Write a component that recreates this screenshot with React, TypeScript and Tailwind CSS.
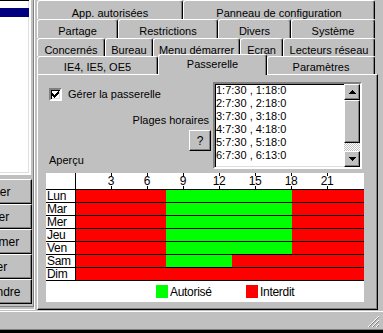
import React from 'react';

type TabDef = { label: string; w: string; sel?: boolean };

const tabRows: { h: string; pt: string; tabs: TabDef[] }[] = [
  {
    h: 'h-[19px]',
    pt: 'pt-[6px]',
    tabs: [
      { label: 'App. autorisées', w: 'w-[146px]' },
      { label: 'Panneau de configuration', w: 'w-[192px]' },
    ],
  },
  {
    h: 'h-[19px]',
    pt: 'pt-[5px]',
    tabs: [
      { label: 'Partage', w: 'w-[81px]' },
      { label: 'Restrictions', w: 'w-[100px]' },
      { label: 'Divers', w: 'w-[73px]' },
      { label: 'Système', w: 'w-[84px]' },
    ],
  },
  {
    h: 'h-[18px]',
    pt: 'pt-[5px]',
    tabs: [
      { label: 'Concernés', w: 'w-[68px]' },
      { label: 'Bureau', w: 'w-[48px]' },
      { label: 'Menu démarrer', w: 'w-[87px]' },
      { label: 'Ecran', w: 'w-[43px]' },
      { label: 'Lecteurs réseau', w: 'w-[92px]' },
    ],
  },
  {
    h: 'h-[18px]',
    pt: 'pt-[4px]',
    tabs: [
      { label: 'IE4, IE5, OE5', w: 'w-[121px]' },
      { label: 'Passerelle', w: 'w-[109px]', sel: true },
      { label: 'Paramètres', w: 'w-[108px]' },
    ],
  },
];

const leftButtons = ['Ajouter', 'Copier', 'Supprimer', 'Coller', 'Descendre'];

const plages = [
  '1:7:30 , 1:18:0',
  '2:7:30 , 2:18:0',
  '3:7:30 , 3:18:0',
  '4:7:30 , 4:18:0',
  '5:7:30 , 5:18:0',
  '6:7:30 , 6:13:0',
];

// hours allowed per day: [from, to] in hours, null = never
const days: { label: string; range: [number, number] | null }[] = [
  { label: 'Lun', range: [7.5, 18] },
  { label: 'Mar', range: [7.5, 18] },
  { label: 'Mer', range: [7.5, 18] },
  { label: 'Jeu', range: [7.5, 18] },
  { label: 'Ven', range: [7.5, 18] },
  { label: 'Sam', range: [7.5, 13] },
  { label: 'Dim', range: null },
];

const HOUR = 12; // px per hour in the chart

const raised =
  'border border-white border-r-black border-b-black shadow-[inset_-1px_-1px_0_#808080]';
const sunken =
  'border-2 border-t-[#808080] border-l-[#808080] border-b-white border-r-white shadow-[inset_1px_1px_0_#000,inset_-1px_-1px_0_#dfdfdf]';

const checkPixels = [[6], [5, 6], [0, 4, 5, 6], [0, 1, 3, 4, 5], [0, 1, 2, 3, 4], [1, 2, 3], [2]];

function Tab({ tab, pt }: { tab: TabDef; pt: string }) {
  if (tab.sel) {
    return (
      <div
        className={`${tab.w} relative z-10 -mt-[2px] h-[21px] shrink-0 rounded-t-[3px] border-l border-t border-r border-white border-r-black bg-[#c0c0c0] pt-[3px] text-center leading-[13px] shadow-[inset_-1px_0_0_#808080]`}
      >
        {tab.label}
      </div>
    );
  }
  return (
    <div
      className={`${tab.w} ${pt} h-full shrink-0 rounded-t-[3px] border-l border-t border-r border-white border-r-black text-center leading-[13px] shadow-[inset_-1px_0_0_#808080]`}
    >
      {tab.label}
    </div>
  );
}

function ScrollButton({ up }: { up?: boolean }) {
  return (
    <div className={`flex h-[16px] items-center justify-center bg-[#c0c0c0] ${raised}`}>
      <svg width="7" height="4" viewBox="0 0 7 4" shapeRendering="crispEdges">
        {up ? <polygon points="3.5,0 7,4 0,4" fill="#000" /> : <polygon points="0,0 7,0 3.5,4" fill="#000" />}
      </svg>
    </div>
  );
}

function Chart() {
  const ticks = [3, 6, 9, 12, 15, 18, 21];
  return (
    <div className="mt-[4px] flex h-[129px] w-[318px] flex-col bg-white text-[12px] leading-[12px] tracking-[-0.3px]">
      {/* hours header */}
      <div className="flex h-[16px]">
        <div className="w-[29px]" />
        <div className="w-px bg-black" />
        <div className="relative w-[288px]">
          {ticks.map((t) => (
            <div key={t} className="absolute top-0 h-full" style={{ left: t * HOUR - 1 }}>
              <div className="absolute top-0 h-full w-px bg-black" />
              <span className="absolute top-[3px] -translate-x-1/2 bg-white px-px leading-[10px]">{t}</span>
            </div>
          ))}
        </div>
      </div>

      {/* days */}
      {days.map((d) => {
        const from = d.range ? d.range[0] * HOUR : 0;
        const width = d.range ? (d.range[1] - d.range[0]) * HOUR : 0;
        return (
          <div key={d.label} className="flex h-[13px] border-t border-black">
            <div className="w-[29px] pl-[1px]">{d.label}</div>
            <div className="w-px bg-black" />
            <div className="flex w-[288px] bg-[#ff0000]">
              <div style={{ width: from }} />
              <div className="bg-[#00ff00]" style={{ width }} />
            </div>
          </div>
        );
      })}
      <div className="h-px bg-black" />

      {/* legend */}
      <div className="flex flex-1 pl-[110px] pt-[4px]">
        <div className="flex w-[90px] items-start">
          <div className="h-[13px] w-[12px] bg-[#00ff00]" />
          <span className="ml-[2px] mt-[1px]">Autorisé</span>
        </div>
        <div className="flex items-start">
          <div className="h-[13px] w-[12px] bg-[#ff0000]" />
          <span className="ml-[2px] mt-[1px]">Interdit</span>
        </div>
      </div>
    </div>
  );
}

export default function App() {
  return (
    <div className="h-[333px] w-[383px] overflow-hidden bg-[#c0c0c0] font-['Liberation_Sans',Arial,sans-serif] text-[11px] text-black">
      <div className="flex h-[311px] gap-[2px]">
        {/* left pane, cut by the window edge */}
        <div className="h-[310px] w-[35px] border-b border-r border-white">
          <div className="h-full border-b border-r border-[#808080]">
            <div className={`-ml-[4px] -mt-[2px] h-[177px] w-[35px] bg-white ${sunken}`}>
              <div className="mt-[8px] h-[9px] bg-[#000080]" />
            </div>
            <div className="mt-[4px] flex flex-col">
              {leftButtons.map((b) => (
                <div
                  key={b}
                  className={`-ml-[49px] flex h-[25px] w-[81px] items-center justify-center bg-[#c0c0c0] text-[12px] ${raised}`}
                >
                  {b}
                </div>
              ))}
            </div>
          </div>
        </div>

        {/* property sheet */}
        <div className="flex w-[341px] flex-col">
          {tabRows.map((r, i) => (
            <div key={i} className={`flex w-[338px] items-start ${r.h}`}>
              {r.tabs.map((t) => (
                <Tab key={t.label} tab={t} pt={r.pt} />
              ))}
            </div>
          ))}

          <div className="h-[236px] w-[341px] border border-white border-r-black border-b-black pl-[8px] pt-[7px] shadow-[inset_-1px_-1px_0_#808080]">
            <div className="flex h-[87px]">
              <div className="flex w-[165px] flex-col">
                <div className="mt-[6px] flex items-center pl-[3px]">
                  <div className={`flex h-[13px] w-[13px] items-center justify-center bg-white ${sunken}`}>
                    <svg width="7" height="7" viewBox="0 0 7 7" shapeRendering="crispEdges">
                      {checkPixels.map((cols, y) =>
                        cols.map((x) => <rect key={`${x}-${y}`} x={x} y={y} width="1" height="1" fill="#000" />)
                      )}
                    </svg>
                  </div>
                  <span className="ml-[6px] leading-[13px]">Gérer la passerelle</span>
                </div>
                <div className="mt-[13px] pr-[2px] text-right leading-[13px]">Plages horaires</div>
                <div
                  className={`mt-[3px] flex h-[21px] w-[22px] items-center justify-center self-end bg-[#c0c0c0] text-[12px] ${raised}`}
                >
                  ?
                </div>
                <div className="mt-[3px] pl-[3px] leading-[13px]">Aperçu</div>
              </div>

              <div className={`ml-[2px] flex h-[87px] w-[149px] bg-white ${sunken}`}>
                <div className="flex-1 pl-[1px] text-[11px] leading-[13px]">
                  {plages.map((p) => (
                    <div key={p}>{p}</div>
                  ))}
                </div>
                <div className="flex w-[16px] flex-col">
                  <ScrollButton up />
                  <div className={`h-[43px] bg-[#c0c0c0] ${raised}`} />
                  <div className="flex-1 bg-[repeating-conic-gradient(#c0c0c0_0_25%,#ffffff_0_50%)] bg-[length:2px_2px]" />
                  <ScrollButton />
                </div>
              </div>
            </div>

            <Chart />
          </div>
        </div>
      </div>

      {/* status strip and window frame */}
      <div className="flex h-[18px] border-t border-white">
        <div className="flex-1" />
        <div className="flex w-[16px] items-end justify-end pb-[1px] pr-[3px]">
          <svg width="12" height="12" viewBox="0 0 12 12" shapeRendering="crispEdges">
            <path d="M11 0 L0 11 M11 4 L4 11 M11 8 L8 11" stroke="#ffffff" strokeWidth="1" />
            <path d="M11 1 L1 11 M11 5 L5 11 M11 9 L9 11" stroke="#808080" strokeWidth="1" />
          </svg>
        </div>
      </div>
      <div className="h-px bg-[#808080]" />
      <div className="h-[3px] bg-black" />
    </div>
  );
}
